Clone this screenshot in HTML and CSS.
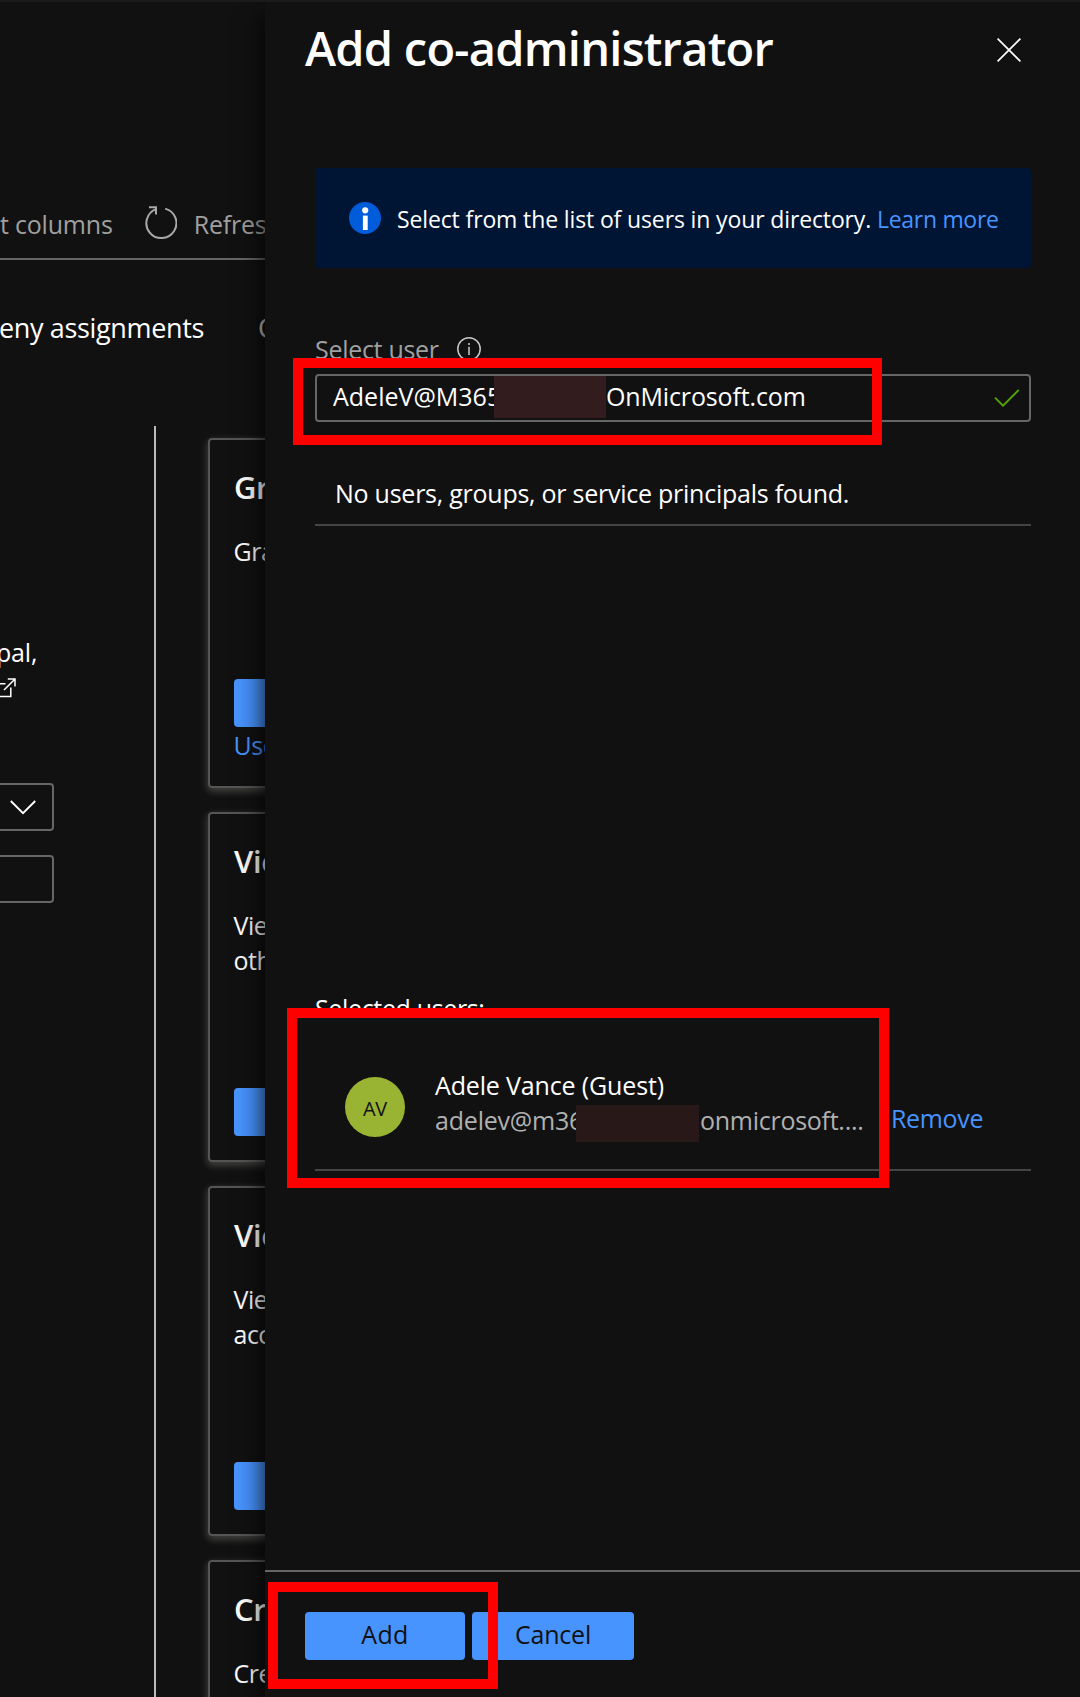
FILE: index.html
```html
<!DOCTYPE html>
<html lang="en">
<head>
<meta charset="utf-8">
<title>Add co-administrator</title>
<link rel="stylesheet" href="styles.css">
</head>
<body>
<div class="app">
  <main class="page">
    <div class="toolbar">
      <span>t columns</span>
      <svg class="refresh" width="32" height="34" viewBox="0 0 32 34" fill="none" stroke="#a9a9a9" stroke-width="2"><path d="M20.200 2.600A15 15 0 1 1 11 3.100"/><path d="M4 1.200h7v7.300"/></svg>
      <span>Refres</span>
    </div>
    <nav class="tabs">
      <span class="tab active">eny assignments</span>
      <span class="tab">C</span>
    </nav>
    <div class="body">
      <section class="check">
        <p class="check-text">pal,</p>
        <div class="check-link">
          <svg width="20" height="20" viewBox="0 0 20 20" fill="none" stroke="#fff" stroke-width="1.5"><path d="M9.5 5.7H1.5v12.8h13.3V9.500M8 12L19 1M11.800 1H19v7.500"/></svg>
        </div>
        <div class="box">
          <svg width="26" height="15" viewBox="0 0 26 15" fill="none" stroke="#fff" stroke-width="1.9"><path d="M.8 1L13 13.200 25.200 1"/></svg>
        </div>
        <div class="box"></div>
      </section>
      <section class="cards">
        <article class="card"><h2>Gr</h2><p>Gra</p><div class="card-btn"></div><a class="link">Use</a></article>
        <article class="card"><h2>Vie</h2><p>Vie<br>oth</p><div class="card-btn"></div></article>
        <article class="card"><h2>Vie</h2><p>Vie<br>acc</p><div class="card-btn"></div></article>
        <article class="card"><h2>Cr</h2><p>Cre</p></article>
      </section>
    </div>
  </main>

  <aside class="panel">
    <header class="panel-head">
      <h1>Add co-administrator</h1>
      <svg width="24" height="24" viewBox="0 0 24 24" fill="none" stroke="#fff" stroke-width="1.7"><path d="M.6.6l22.800 22.800M23.400.6L.6 23.400"/></svg>
    </header>
    <div class="panel-body">
      <div class="info">
        <svg width="32" height="32" viewBox="0 0 32 32"><circle cx="16" cy="16" r="16" fill="#015cda"/><circle cx="16.200" cy="8.300" r="3.100" fill="#fff"/><rect x="13.900" y="13.600" width="4.800" height="14.400" fill="#fff"/></svg>
        <span class="info-text">Select from the list of users in your directory.</span>
        <a class="link">Learn more</a>
      </div>
      <div class="label">
        <span>Select user</span>
        <svg width="24" height="24" viewBox="0 0 24 24" fill="none" stroke="#c8c8c8" stroke-width="1.500"><circle cx="12" cy="12" r="11.200"/><path d="M12 9.700v8.300M12 6v1.900"/></svg>
      </div>
      <div class="field">
        <span class="field-start">AdeleV@M365</span>
        <span class="mask"></span>
        <span class="field-end">OnMicrosoft.com</span>
        <svg width="26" height="18" viewBox="0 0 26 18" fill="none" stroke="#57a300" stroke-width="1.900"><path d="M1 8.700l8 8L24.800.8"/></svg>
      </div>
      <p class="empty">No users, groups, or service principals found.</p>
      <h3>Selected users:</h3>
      <div class="user">
        <span class="avatar">AV</span>
        <div class="who">
          <div class="name">Adele Vance (Guest)</div>
          <div class="mail"><span class="mail-start">adelev@m36</span><span class="mask"></span><span class="mail-end">onmicrosoft....</span></div>
        </div>
        <a class="link remove">Remove</a>
      </div>
    </div>
    <footer class="actions">
      <button class="btn add">Add</button>
      <button class="btn cancel">Cancel</button>
    </footer>
  </aside>

  <div class="mark mark-field"></div>
  <div class="mark mark-user"></div>
  <div class="mark mark-add"></div>
</div>
</body>
</html>
```
FILE: styles.css
```css
* { box-sizing: border-box; margin: 0; padding: 0; }
body { background: #111; color: #fff; font: 25px/35px "Open Sans", "Noto Sans", sans-serif; letter-spacing: -0.2px; }
svg { display: block; flex: none; }
.app { position: relative; display: flex; width: 1080px; height: 1697px; overflow: hidden; border-top: 2px solid #1b1b1b; }
.link { color: #4894fe; }

/* page behind the panel */
.page { width: 265px; flex: none; white-space: nowrap; }
.toolbar { display: flex; align-items: flex-end; height: 258px; padding-bottom: 16px; border-bottom: 2px solid #666; color: #a0a0a0; }
.refresh { margin: 0 17px 2px 32px; }
.tabs { display: flex; gap: 54px; height: 166px; padding-top: 50px; font-size: 27px; line-height: 36px; letter-spacing: -0.35px; margin-left: -1px; }
.tab { color: #c0c0c0; }
.tab.active { color: #fff; }
.body { display: flex; height: 1271px; }
.check { width: 156px; flex: none; padding-top: 209px; border-right: 2px solid #bbb; }
.check-text { margin-left: -4px; }
.check-link { display: flex; align-items: center; height: 35px; margin: 0 0 78px -4px; }
.box { display: flex; align-items: center; justify-content: flex-end; width: 54px; height: 48px; padding-right: 16px; margin-bottom: 24px; border: 2px solid #666; border-left: 0; border-radius: 0 4px 4px 0; }
.cards { display: flex; flex-direction: column; gap: 24px; margin-left: 52px; padding-top: 12px; }
.card { display: flex; flex-direction: column; flex: none; width: 600px; height: 350px; padding: 27px 24px 24px; border: 2px solid #555; border-radius: 4px; box-shadow: 0 3px 7px 1px rgba(255, 248, 240, .2); }
.card h2 { font-size: 31px; line-height: 40px; font-weight: 600; margin-bottom: 27px; letter-spacing: -0.4px; }
.card p, .card .link { letter-spacing: -0.5px; margin-left: -0.5px; }
.card-btn { height: 48px; flex: none; margin-top: auto; border-radius: 4px; background: #4894fe; }
.card .link { position: relative; top: 1px; }

/* side panel */
.panel { position: relative; display: flex; flex-direction: column; width: 815px; flex: none; background: #111; box-shadow: 0 12px 26px rgba(0, 0, 0, .95); }
.panel-head { display: flex; justify-content: space-between; align-items: center; height: 76px; padding: 18px 59px 0 40px; }
.panel-head h1 { font-size: 47px; line-height: 60px; font-weight: 600; letter-spacing: -0.75px; margin-top: -2px; }
.panel-head svg { margin-top: 2px; }
.panel-body { flex: 1; padding: 90px 49px 0 50px; }
.info { display: flex; height: 100px; padding: 34px 30px 0 34px; border-radius: 4px; background: #001433; font-size: 23px; line-height: 35px; letter-spacing: -0.13px; }
.info-text { width: 480px; margin-left: 16px; white-space: nowrap; }
.info .link { white-space: nowrap; letter-spacing: -0.3px; }
.label { display: flex; align-items: center; gap: 18px; height: 35px; margin-top: 64px; color: #a0a0a0; letter-spacing: -0.3px; }
.label svg { margin-bottom: 1px; }
.field { display: flex; align-items: flex-start; height: 48px; margin-top: 7px; padding: 0 9px 0 16px; border: 2px solid #666; border-radius: 4px; line-height: 41px; }
.field-start { width: 161px; overflow: hidden; white-space: nowrap; letter-spacing: 0; }
.field-end { letter-spacing: -0.14px; }
.field .mask { width: 112px; height: 42px; background: #331c1d; }
.field svg { margin: 13px 0 0 auto; }
.empty { margin-top: 54px; padding: 0 0 13px 20px; border-bottom: 2px solid #444; letter-spacing: -0.25px; }
h3 { margin-top: 465px; font-size: 25px; font-weight: 400; letter-spacing: -0.35px; }
.user { display: flex; height: 103px; margin-top: 42px; border-bottom: 2px solid #444; }
.avatar { width: 60px; height: 60px; margin: 9px 30px 0; border-radius: 50%; background: #99b433; color: #111; font-size: 20px; line-height: 63px; text-align: center; flex: none; }
.who { width: 456px; flex: none; }
.name { letter-spacing: -0.15px; }
.mail { display: flex; color: #b0b0b0; }
.mail-start { width: 141px; overflow: hidden; white-space: nowrap; }
.mail .mask { width: 123px; height: 37px; margin-top: 2px; background: #281918; }
.mail-end { margin-left: 1px; letter-spacing: -0.27px; }
.remove { margin-top: 33px; letter-spacing: -0.35px; }
.actions { display: flex; height: 127px; padding: 40px; gap: 7px; border-top: 2px solid #666; }
.btn { height: 48px; border: 0; border-radius: 4px; background: #4894fe; color: #111; font: 500 25px/44px "Open Sans", "Noto Sans", sans-serif; padding-bottom: 4px; letter-spacing: -0.2px; }
.add { width: 160px; letter-spacing: 0.4px; }
.cancel { width: 162px; }

/* highlight frames drawn over the panel */
.mark { position: absolute; border: 10px solid #f00; }
.mark-field { left: 293px; top: 356px; width: 589px; height: 87px; }
.mark-user { left: 287px; top: 1006px; width: 602px; height: 180px; }
.mark-add { left: 268px; top: 1580px; width: 230px; height: 107px; }
```
